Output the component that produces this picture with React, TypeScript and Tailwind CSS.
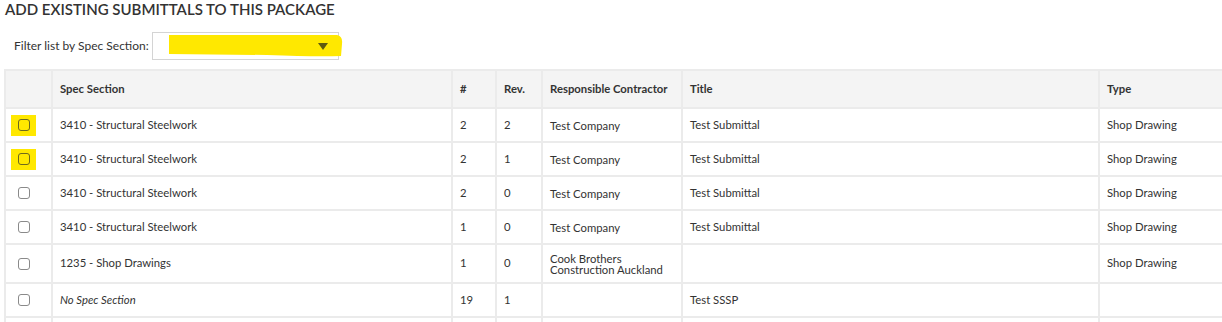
import React from 'react'

const rows = [
  { spec: '3410 - Structural Steelwork', num: '2', rev: '2', contractor: 'Test Company', title: 'Test Submittal', type: 'Shop Drawing', mark: true },
  { spec: '3410 - Structural Steelwork', num: '2', rev: '1', contractor: 'Test Company', title: 'Test Submittal', type: 'Shop Drawing', mark: true },
  { spec: '3410 - Structural Steelwork', num: '2', rev: '0', contractor: 'Test Company', title: 'Test Submittal', type: 'Shop Drawing' },
  { spec: '3410 - Structural Steelwork', num: '1', rev: '0', contractor: 'Test Company', title: 'Test Submittal', type: 'Shop Drawing' },
  { spec: '1235 - Shop Drawings', num: '1', rev: '0', contractor: 'Cook Brothers Construction Auckland', title: '', type: 'Shop Drawing', tall: true },
  { spec: 'No Spec Section', num: '19', rev: '1', contractor: '', title: 'Test SSSP', type: '', italic: true },
]

function Box({ mark }: { mark?: boolean }) {
  return (
    <div className="flex">
      <span className={mark ? 'flex h-[21px] w-[25px] items-center justify-center bg-[#ffe800]' : 'flex h-[21px] w-[25px] items-center justify-center'}>
        <span className={mark ? 'h-[12px] w-[12px] rounded-[3px] border border-[#6f6a1c]' : 'h-[12px] w-[12px] rounded-[3px] border border-[#8a8a8a] bg-white'} />
      </span>
    </div>
  )
}

export default function App() {
  const cell = 'border-2 border-[#ebebeb] px-[7px] align-middle'
  const boxCell = 'border-2 border-[#ebebeb] px-[5px] align-middle'
  return (
    <div className="h-[322px] w-[1222px] overflow-hidden bg-white font-['Lato',sans-serif] text-[#333]">
      <h2 className="pl-[5px] text-[15px] font-semibold leading-[19px] text-[#333]">ADD EXISTING SUBMITTALS TO THIS PACKAGE</h2>

      <div className="mt-[13px] flex items-center pl-[14px]">
        <span className="text-[12px] text-[#333]">Filter list by Spec Section:</span>
        <div className="relative ml-[3px] h-[28px] w-[187px] border border-[#d4d4d4] bg-white">
          <svg className="absolute -top-[1px] left-[14px]" width="176" height="27" viewBox="0 0 176 27">
            <path d="M2 3 L170 3 Q176 4 175 12 L174 24 Q150 25 100 23 L2 22 Z" fill="#ffe800" />
          </svg>
          <svg className="absolute left-[165px] top-[10px]" width="10" height="7" viewBox="0 0 10 7">
            <path d="M0 0 L10 0 L5 7 Z" fill="#5e5a10" />
          </svg>
        </div>
      </div>

      <table className="ml-[4px] mt-[9px] w-[1234px] table-fixed border-collapse text-[11.3px]">
        <colgroup>
          <col className="w-[47px]" />
          <col className="w-[400px]" />
          <col className="w-[44px]" />
          <col className="w-[46px]" />
          <col className="w-[140px]" />
          <col className="w-[417px]" />
          <col className="w-[140px]" />
        </colgroup>
        <thead>
          <tr className="h-[38px] bg-[#f4f4f4] text-left font-bold">
            <th className={cell}></th>
            <th className={cell}>Spec Section</th>
            <th className={cell}>#</th>
            <th className={cell}>Rev.</th>
            <th className={cell}>Responsible Contractor</th>
            <th className={cell}>Title</th>
            <th className={cell}>Type</th>
          </tr>
        </thead>
        <tbody>
          {rows.map((r, i) => (
            <tr key={i} className={r.tall ? 'h-[39px]' : 'h-[34px]'}>
              <td className={boxCell}><Box mark={r.mark} /></td>
              <td className={r.italic ? cell + ' italic' : cell}>{r.spec}</td>
              <td className={cell}>{r.num}</td>
              <td className={cell}>{r.rev}</td>
              <td className={cell + ' leading-[11px]'}>{r.contractor}</td>
              <td className={cell}>{r.title}</td>
              <td className={cell}>{r.type}</td>
            </tr>
          ))}
          <tr className="h-[34px]">
            <td className={cell}></td>
            <td className={cell}></td>
            <td className={cell}></td>
            <td className={cell}></td>
            <td className={cell}></td>
            <td className={cell}></td>
            <td className={cell}></td>
          </tr>
        </tbody>
      </table>
    </div>
  )
}
